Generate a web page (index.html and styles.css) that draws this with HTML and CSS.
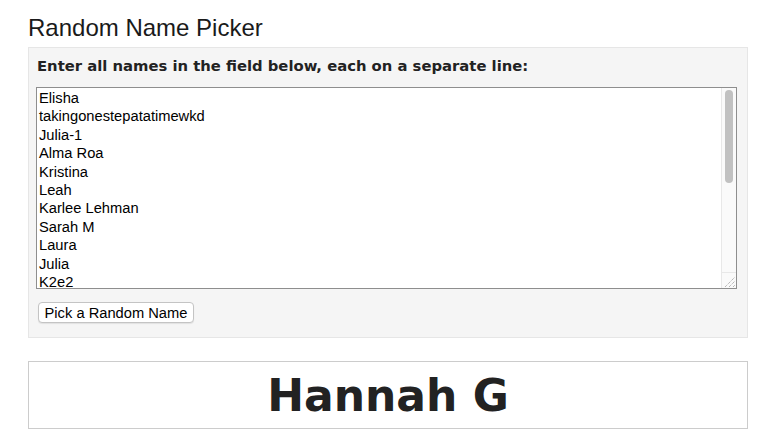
FILE: index.html
```html
<!DOCTYPE html>
<html>
<head>
<meta charset="utf-8">
<title>Random Name Picker</title>
<link rel="stylesheet" href="styles.css">
</head>
<body>
<div class="page">
  <h1 class="title">Random Name Picker</h1>
  <div class="panel">
    <label class="label" for="names">Enter all names in the field below, each on a separate line:</label>
    <div class="field">
      <textarea id="names" class="names">Elisha
takingonestepatatimewkd
Julia-1
Alma Roa
Kristina
Leah
Karlee Lehman
Sarah M
Laura
Julia
K2e2
Hannah G
Megan
Jessica R
Amanda
Brittany
Nicole
Stephanie
Emily
Rachel
Ashley
Katie</textarea>
      <div class="scroll-track" aria-hidden="true"><div class="scroll-thumb"></div></div>
      <div class="scroll-corner" aria-hidden="true">
        <svg width="14" height="14" viewBox="0 0 14 14">
          <path d="M3 13 L13 3 M7 13 L13 7 M11 13 L13 11" stroke="#9a9a9a" stroke-width="1" stroke-dasharray="1 1" fill="none"/>
        </svg>
      </div>
    </div>
    <div class="actions">
      <button class="pick" type="button">Pick a Random Name</button>
    </div>
  </div>
  <div class="result">Hannah G</div>
</div>
</body>
</html>
```
FILE: styles.css
```css
html, body {
  margin: 0;
  padding: 0;
  background: #ffffff;
}
.page {
  width: 720px;
  margin-left: 28px;
  padding-top: 14px;
  font-family: "Liberation Sans", Arial, sans-serif;
  color: #1a1a1a;
}
.title {
  margin: 0 0 5px 0;
  font-size: 24px;
  font-weight: normal;
  line-height: 28px;
  color: #1a1a1a;
}
.panel {
  background: #f5f5f5;
  border: 1px solid #e6e6e6;
  padding: 10px 10px 14px 7px;
}
.label {
  display: block;
  font-family: "DejaVu Sans", Verdana, sans-serif;
  font-weight: bold;
  font-size: 14.8px;
  line-height: 16px;
  color: #222;
  margin: 0 0 13px 1px;
}
.field {
  position: relative;
  width: 701px;
  height: 202px;
}
.names {
  display: block;
  box-sizing: border-box;
  width: 701px;
  height: 202px;
  margin: 0;
  padding: 1px 18px 1px 2px;
  border: 1px solid #8e8e8e;
  font-family: "Liberation Sans", Arial, sans-serif;
  font-size: 14.7px;
  line-height: 18.4px;
  color: #000;
  background: #fff;
  resize: none;
  overflow: hidden;
}
.scroll-track {
  position: absolute;
  top: 1px;
  right: 1px;
  bottom: 16px;
  width: 14px;
  background: #fafafa;
  border-left: 1px solid #e8e8e8;
}
.scroll-thumb {
  margin: 2px 0 0 3px;
  width: 8px;
  height: 93px;
  border-radius: 4px;
  background: #c1c1c1;
}
.scroll-corner {
  position: absolute;
  right: 1px;
  bottom: 1px;
  width: 14px;
  height: 15px;
  background: #fafafa;
  border-left: 1px solid #e8e8e8;
  border-top: 1px solid #e8e8e8;
  box-sizing: content-box;
  display: flex;
  align-items: flex-end;
  justify-content: flex-end;
}
.scroll-corner svg {
  display: block;
}
.actions {
  margin-top: 13px;
  display: flex;
}
.pick {
  margin-left: 2px;
  box-sizing: border-box;
  width: 156px;
  height: 21px;
  padding: 0;
  white-space: nowrap;
  font-family: "Liberation Sans", Arial, sans-serif;
  font-size: 14.7px;
  color: #000;
  background: #fff;
  border: 1px solid #c4c4c4;
  border-radius: 4px;
  box-shadow: 0 1px 1px rgba(0,0,0,0.08);
}
.result {
  margin-top: 23px;
  height: 66px;
  border: 1px solid #cccccc;
  background: #fff;
  display: flex;
  align-items: center;
  justify-content: center;
  font-family: "DejaVu Sans", Verdana, sans-serif;
  font-weight: bold;
  font-size: 44px;
  color: #222;
}
```
